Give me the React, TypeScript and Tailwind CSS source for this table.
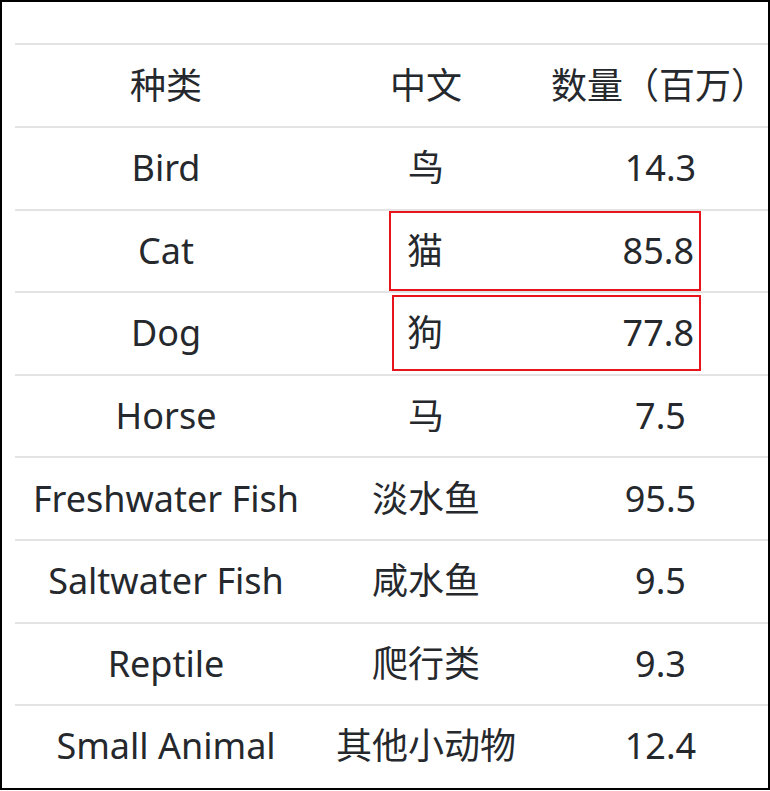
const rows = [
  { en: "Bird", zh: "鸟", n: "14.3" },
  { en: "Cat", zh: "猫", n: "85.8", box: "cat" },
  { en: "Dog", zh: "狗", n: "77.8", box: "dog" },
  { en: "Horse", zh: "马", n: "7.5" },
  { en: "Freshwater Fish", zh: "淡水鱼", n: "95.5" },
  { en: "Saltwater Fish", zh: "咸水鱼", n: "9.5" },
  { en: "Reptile", zh: "爬行类", n: "9.3" },
  { en: "Small Animal", zh: "其他小动物", n: "12.4" },
];

const font = {
  fontFamily: '"Noto Sans", "Noto Sans CJK SC", sans-serif',
};

export default function App() {
  return (
    <div
      className="w-[770px] h-[790px] border-2 border-black bg-white overflow-hidden pl-[13px] text-[#25282c] text-[36px]"
      style={font}
    >
      <div className="h-[41px]" />
      {/* header */}
      <div className="flex h-[83px] border-t-2 border-[#e3e3e3]">
        <div className="w-[302px] flex items-center justify-center">种类</div>
        <div className="w-[218px] flex items-center justify-center">中文</div>
        <div className="flex-1 flex items-center justify-start pl-[16px] whitespace-nowrap">数量（百万）</div>
      </div>
      {rows.map((r) => (
        <div key={r.en} className="relative flex h-[82.6px] border-t-2 border-[#e3e3e3]">
          <div className="w-[302px] flex items-center justify-center whitespace-nowrap">{r.en}</div>
          {r.box ? (
            <>
              <div className="w-[218px] flex items-center justify-start pl-[90px]">{r.zh}</div>
              <div className="flex-1 flex items-center justify-end pr-[74px]">{r.n}</div>
              {r.box === "cat" ? (
                <div className="absolute left-[374px] top-0 w-[312px] h-[80px] border-2 border-[#e8141b]" />
              ) : (
                <div className="absolute left-[377px] top-[2px] w-[309px] h-[76px] border-2 border-[#e8141b]" />
              )}
            </>
          ) : (
            <>
              <div className="w-[218px] flex items-center justify-center whitespace-nowrap">{r.zh}</div>
              <div className="flex-1 flex items-center justify-center pl-[18px]">{r.n}</div>
            </>
          )}
        </div>
      ))}
    </div>
  );
}
